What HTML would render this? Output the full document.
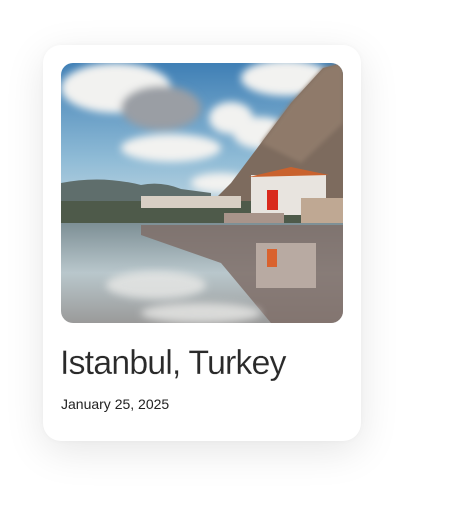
<!DOCTYPE html>
<html><head><style>
html,body{margin:0;padding:0;background:#fff;width:452px;height:531px;overflow:hidden}
.card{position:absolute;left:43px;top:45px;width:318px;height:396px;background:#fff;border-radius:18px;box-shadow:0 10px 40px rgba(0,0,0,0.10),0 0 6px rgba(0,0,0,0.03)}
.img{position:absolute;left:18px;top:18px;width:282px;height:260px;border-radius:12px;overflow:hidden}
.t{position:absolute;left:17px;top:299px;font-family:"Liberation Sans",sans-serif;font-size:34px;font-weight:300;color:#2a2a2a;letter-spacing:-0.9px;white-space:nowrap;-webkit-text-stroke:0.2px #fff}
.d{position:absolute;left:18px;top:351px;font-family:"Liberation Sans",sans-serif;font-size:14px;color:#222;white-space:nowrap}
</style></head><body>
<div class="card">
<div class="img">
<svg width="282" height="260" viewBox="0 0 282 260">
<defs>
<linearGradient id="sky" x1="0" y1="0" x2="0" y2="1"><stop offset="0" stop-color="#3f7fb5"/><stop offset="0.6" stop-color="#8fbbd6"/><stop offset="1" stop-color="#c9dbe3"/></linearGradient>
<linearGradient id="w" x1="0" y1="0" x2="0" y2="1"><stop offset="0" stop-color="#7d8f95"/><stop offset="0.5" stop-color="#b9c7cc"/><stop offset="1" stop-color="#9a9a9a"/></linearGradient>
<filter id="b"><feGaussianBlur stdDeviation="4"/></filter>
<filter id="b2"><feGaussianBlur stdDeviation="2"/></filter>
</defs>
<rect width="282" height="160" fill="url(#sky)"/>
<g filter="url(#b)" fill="#f2f2f0">
<ellipse cx="55" cy="25" rx="55" ry="25"/>
<ellipse cx="100" cy="45" rx="40" ry="22" fill="#9a9ea4"/>
<ellipse cx="110" cy="85" rx="50" ry="14"/>
<ellipse cx="170" cy="55" rx="22" ry="16"/>
<ellipse cx="225" cy="15" rx="45" ry="18"/>
<ellipse cx="200" cy="70" rx="28" ry="16"/>
<ellipse cx="160" cy="120" rx="30" ry="10"/>
</g>
<path d="M0 120 Q40 112 80 122 Q100 118 120 126 L150 130 L150 150 L0 150Z" fill="#5f6e6c"/>
<path d="M140 150 L170 120 L200 80 L230 40 L262 5 L282 0 L282 180 L140 180Z" fill="#7d6b5e"/>
<path d="M200 80 L230 40 L262 5 L282 0 L282 60 L240 100Z" fill="#8f7a6a" filter="url(#b2)"/>
<rect x="0" y="138" width="282" height="22" fill="#4e5a4a"/>
<rect x="190" y="112" width="75" height="40" fill="#e8e4df"/>
<path d="M188 114 L230 104 L268 112Z" fill="#c9622e"/>
<rect x="206" y="127" width="11" height="20" fill="#d9291c"/>
<rect x="240" y="135" width="42" height="42" fill="#bfa893"/>
<rect x="80" y="133" width="100" height="12" fill="#d8cfc4"/>
<rect x="163" y="150" width="60" height="18" fill="#a8948a"/>
<rect x="0" y="160" width="282" height="100" fill="url(#w)"/>
<path d="M80 162 L282 162 L282 260 L210 260 L160 200 L80 172Z" fill="#7f6e68" opacity="0.85"/>
<rect x="195" y="180" width="60" height="45" fill="#b8aaa2"/>
<rect x="206" y="186" width="10" height="18" fill="#d9622e"/>
<g filter="url(#b)" fill="#e8e8e6" opacity="0.8">
<ellipse cx="95" cy="222" rx="50" ry="14"/>
<ellipse cx="140" cy="250" rx="60" ry="10"/>
</g>
</svg>
</div>
<div class="t">Istanbul, Turkey</div>
<div class="d">January 25, 2025</div>
</div>
</body></html>
